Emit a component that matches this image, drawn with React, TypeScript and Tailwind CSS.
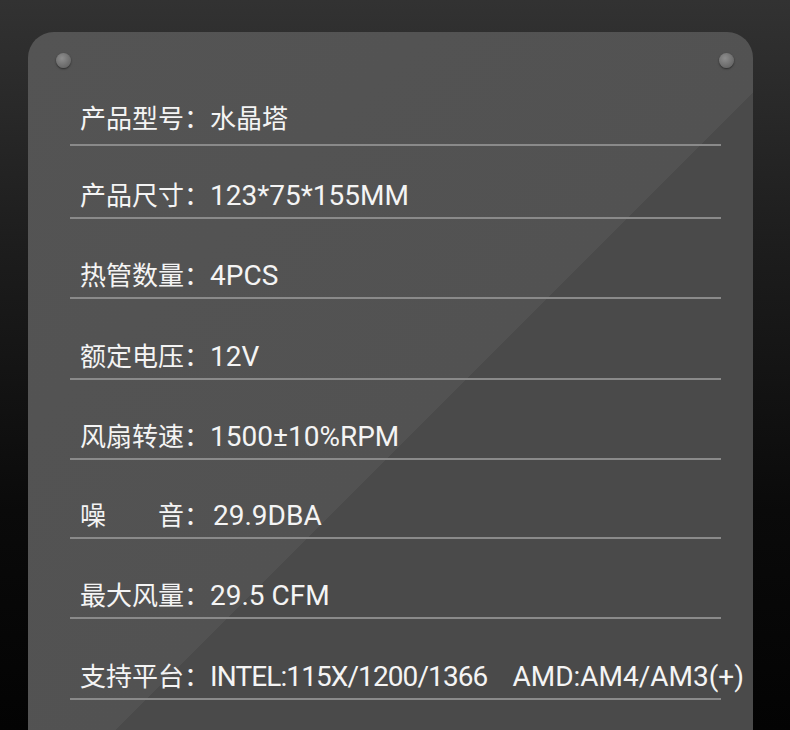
import React from "react";

const L = ({ children, className = "" }: { children: React.ReactNode; className?: string }) => (
  <span className={`text-[28px] ${className}`} style={{ fontFamily: 'Roboto, "Noto Sans CJK SC", sans-serif' }}>
    {children}
  </span>
);

const rows: { label: React.ReactNode; value: React.ReactNode; h: number; pb: number }[] = [
  { label: "产品型号：", value: "水晶塔", h: 114, pb: 14 },
  { label: "产品尺寸：", value: <L>123*75*155MM</L>, h: 73, pb: 8 },
  { label: "热管数量：", value: <L>4PCS</L>, h: 80, pb: 8 },
  { label: "额定电压：", value: <L>12V</L>, h: 81, pb: 8 },
  { label: "风扇转速：", value: <L>1500±10%RPM</L>, h: 80, pb: 8 },
  { label: "噪\u3000\u3000音：", value: <L className="ml-[3px]">29.9DBA</L>, h: 79, pb: 8 },
  { label: "最大风量：", value: <L>29.5 CFM</L>, h: 80, pb: 8 },
  {
    label: "支持平台：",
    value: (
      <>
        <L className="tracking-[-0.9px]">INTEL:115X/1200/1366</L>
        <L className="ml-[25px]">AMD:AM4/AM3(+)</L>
      </>
    ),
    h: 81,
    pb: 8,
  },
];

function Screw() {
  return (
    <div className="w-[15px] h-[15px] rounded-full bg-[radial-gradient(circle_at_40%_35%,#8e8e8e,#6e6e6e_60%,#5c5c5c)] shadow-[0_1px_2px_rgba(0,0,0,0.5)]" />
  );
}

export default function App() {
  return (
    <div
      className="w-[790px] h-[730px] overflow-hidden bg-[linear-gradient(to_bottom,#323232_0%,#1c1c1c_35%,#0a0a0a_70%,#030303_100%)] pt-[32px]"
      style={{ fontFamily: '"Noto Sans CJK SC", "Noto Sans", sans-serif' }}
    >
      <div className="relative ml-[28px] w-[725px] h-[698px] rounded-t-[26px] bg-[linear-gradient(135deg,#545454_0%,#525252_55.2%,#4a4a4a_55.2%,#4a4a4a_100%)]">
        <div className="absolute left-[28px] top-[21px]">
          <Screw />
        </div>
        <div className="absolute right-[19px] top-[21px]">
          <Screw />
        </div>
        <div className="ml-[42px] w-[651px] flex flex-col">
          {rows.map((r, i) => (
            <div
              key={i}
              className="flex items-end border-b-2 border-[#8a8a8a] pl-[10px] whitespace-nowrap text-[#f4f4f4]"
              style={{ height: r.h, paddingBottom: r.pb }}
            >
              <div className="text-[26px] leading-[26px]">
                <span>{r.label}</span>
                {r.value}
              </div>
            </div>
          ))}
        </div>
      </div>
    </div>
  );
}
